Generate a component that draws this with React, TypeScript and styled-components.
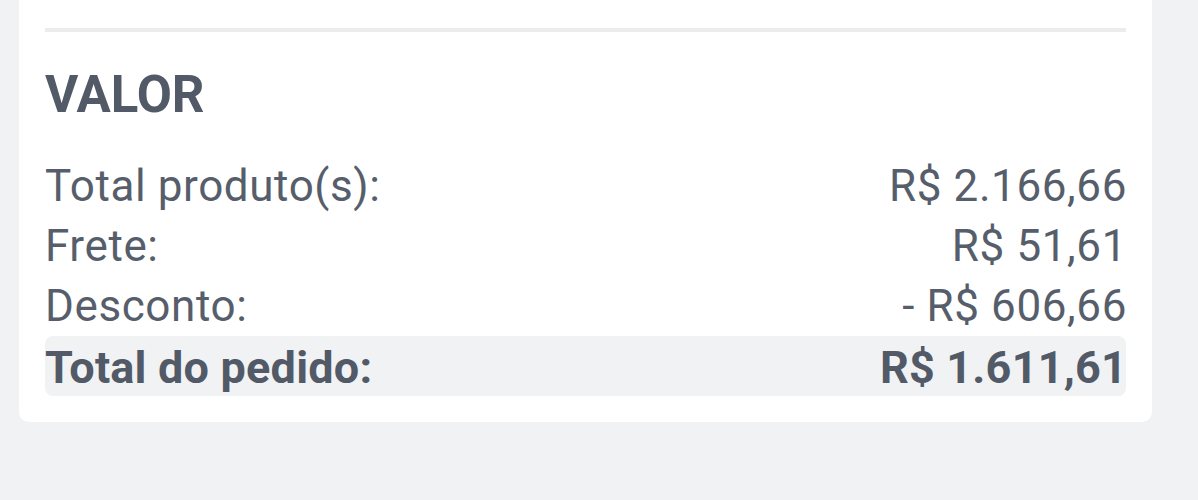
import React from "react";
import styled, { createGlobalStyle } from "styled-components";

const Global = createGlobalStyle`
  html, body { margin: 0; padding: 0; background: #f1f2f4; }
  body { font-family: Roboto, "Noto Sans", sans-serif; color: #525a67; }
`;

const Page = styled.div`
  width: 1198px;
  height: 500px;
  background: #f1f2f4;
  overflow: hidden;
`;

const Card = styled.section`
  margin-left: 19px;
  width: 1133px;
  box-sizing: border-box;
  background: #ffffff;
  border-radius: 0 0 10px 10px;
  padding: 28px 26px 26px;
  display: flex;
  flex-direction: column;
`;

const Divider = styled.hr`
  margin: 0;
  border: none;
  height: 4px;
  background: #ececee;
`;

const Heading = styled.h2`
  margin: 33px 0 31px;
  font-size: 51px;
  line-height: 60px;
  font-weight: 700;
  color: #525a67;
`;

const Rows = styled.div`
  display: flex;
  flex-direction: column;
`;

const Row = styled.div<{ $total?: boolean }>`
  display: flex;
  justify-content: space-between;
  align-items: center;
  height: 60px;
  font-size: ${(p) => (p.$total ? "45px" : "44px")};
  font-weight: ${(p) => (p.$total ? 700 : 400)};
  letter-spacing: ${(p) => (p.$total ? "0.2px" : "0.6px")};
  color: ${(p) => (p.$total ? "#525a67" : "#575e6b")};
  background: ${(p) => (p.$total ? "#f1f2f4" : "transparent")};
  border-radius: 8px;
  line-height: 60px;
  padding-top: ${(p) => (p.$total ? "4px" : "0")};
  box-sizing: border-box;
`;

const Label = styled.span``;
const Value = styled.span`
  margin-right: -1px;
`;

const rows = [
  { label: "Total produto(s):", value: "R$ 2.166,66" },
  { label: "Frete:", value: "R$ 51,61" },
  { label: "Desconto:", value: "- R$ 606,66" },
];

export default function App() {
  return (
    <Page>
      <Global />
      <Card>
        <Divider />
        <Heading>VALOR</Heading>
        <Rows>
          {rows.map((r) => (
            <Row key={r.label}>
              <Label>{r.label}</Label>
              <Value>{r.value}</Value>
            </Row>
          ))}
          <Row $total>
            <Label>Total do pedido:</Label>
            <Value>R$ 1.611,61</Value>
          </Row>
        </Rows>
      </Card>
    </Page>
  );
}
